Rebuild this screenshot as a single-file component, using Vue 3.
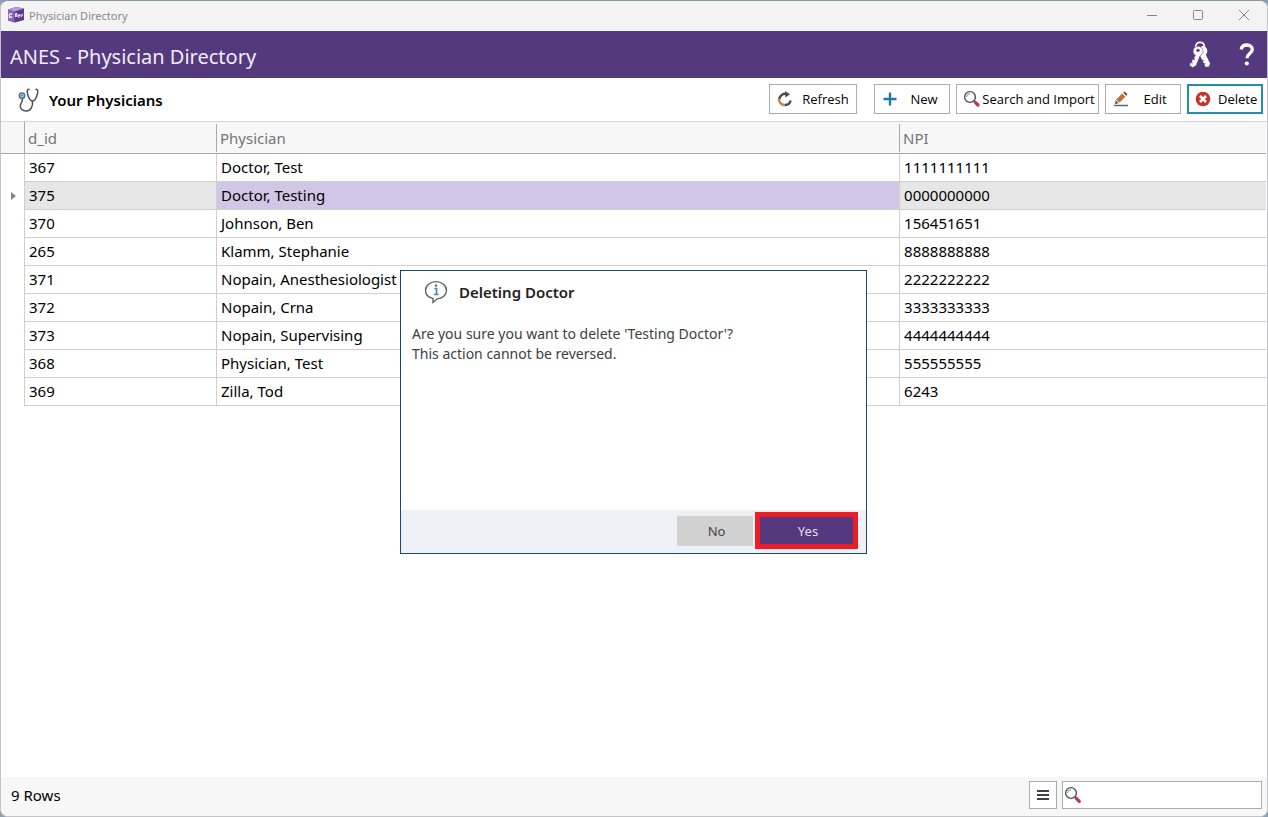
<script setup>
import { ref, computed } from 'vue'

const physicians = [
  { id: '367', name: 'Doctor, Test', npi: '1111111111' },
  { id: '375', name: 'Doctor, Testing', npi: '0000000000' },
  { id: '370', name: 'Johnson, Ben', npi: '156451651' },
  { id: '265', name: 'Klamm, Stephanie', npi: '8888888888' },
  { id: '371', name: 'Nopain, Anesthesiologist', npi: '2222222222' },
  { id: '372', name: 'Nopain, Crna', npi: '3333333333' },
  { id: '373', name: 'Nopain, Supervising', npi: '4444444444' },
  { id: '368', name: 'Physician, Test', npi: '555555555' },
  { id: '369', name: 'Zilla, Tod', npi: '6243' },
]
const selected = ref('375')
const dialogOpen = ref(true)
const search = ref('')
const rows = computed(() =>
  physicians.filter((p) => p.name.toLowerCase().includes(search.value.toLowerCase()))
)
</script>

<template>
  <div class="window">
    <div class="titlebar">
      <svg class="app-icon" width="16" height="16" viewBox="0 0 16 16">
        <path d="M0 2.500 8 0l8 1.500v11.500l-9 2.500-7-2z" fill="#5b3a8c" />
        <path d="M0 2.500 8 0l8 1.500-9.500 3z" fill="#b3a0d2" />
        <path d="M0 2.500l6.500 2v11L0 13.500z" fill="#8767b4" />
        <path d="M4.200 7.200a1.700 1.700 0 1 0 0 2.500M2 10l-1 1" fill="none" stroke="#f1ebf8" stroke-width="1.200" />
        <path d="M7.500 10V6.500h1.500v1.600H7.500l1.700 1.900M12 8.500h-2.200M12 9.800a1.200 1.200 0 1 1 0-1.500M12.500 7.200l1 2.600 1.200-3" fill="none" stroke="#f1ebf8" />
      </svg>
      <span class="titlebar-text">Physician Directory</span>
      <div class="window-controls">
        <button type="button" aria-label="Minimize">
          <svg width="12" height="12" viewBox="0 0 12 12"><path d="M1 6.500h10" /></svg>
        </button>
        <button type="button" aria-label="Maximize">
          <svg width="12" height="12" viewBox="0 0 12 12"><rect x="1.500" y="1.500" width="9" height="9" rx="1" /></svg>
        </button>
        <button type="button" aria-label="Close">
          <svg width="12" height="12" viewBox="0 0 12 12"><path d="M1 1l10 10M11 1 1 11" /></svg>
        </button>
      </div>
    </div>

    <header class="banner">
      <h1>ANES - Physician Directory</h1>
      <div class="banner-actions">
        <button type="button" aria-label="Security">
          <svg width="22" height="28" viewBox="0 0 22 28">
            <path d="M6.500 6.500C6.500 3 8.500 1.400 11 1.400S15.500 3 15.500 6.500" fill="none" stroke="#fff" stroke-width="1.600" />
            <path d="M12.500 5a5 5 0 0 1 5.800 4.800c0 1.700-.6 2.800-1.500 3.600l4.200 9.200-1 2.900-3.400.6-1.200-2.400 1.200-1.300-2.100-.4-.6-1.800 1.100-1-1.900-.4-2.600-5z" fill="#fff" />
            <path d="M9 5.200a5 5 0 0 1 5 5c0 2.200-1.200 3.800-3 4.600L7.200 24.500l-3.200 2-3.400-1.800.7-3.200 2 .7-.6-2 .9-1.900 1.900.6-.6-1.900 1.500-2.600A5 5 0 0 1 9 5.200z" fill="#fff" stroke="#54397e" stroke-width=".5" />
            <circle cx="9" cy="9.300" r="1.600" fill="#54397e" />
          </svg>
        </button>
        <button type="button" aria-label="Help">
          <svg width="16" height="24" viewBox="0 0 16 24">
            <path d="M2.300 6.500C2.600 3.500 4.800 2 7.800 2c3.300 0 5.500 1.700 5.500 4.500 0 4-5.300 4.300-5.300 8.800" fill="none" stroke="#fff" stroke-width="3.300" />
            <circle cx="7.800" cy="20.500" r="2.100" fill="#fff" />
          </svg>
        </button>
      </div>
    </header>

    <section class="toolbar">
      <svg class="steth" width="22" height="26" viewBox="0 0 22 26" fill="none" stroke="#4a5057" stroke-width="1.500" stroke-linecap="round">
        <path d="M11 2.200 9.800 2.700c-1.500 1.500.8 10.800 4.700 11.500 3.900-.7 6.200-10 4.700-11.500L18 2.200" />
        <path d="M14.500 14.200c.5 5-1.500 9.600-6 9.800-4.500.1-6.200-2.300-6.200-5 0-3 2.200-3.500 2.200-7" />
        <circle cx="4" cy="8.800" r="2.700" stroke="#4c7590" fill="#a9c8da" />
        <circle cx="4" cy="8.800" r=".8" fill="#356580" stroke="none" />
      </svg>
      <h2>Your Physicians</h2>
      <div class="tools">
        <button type="button" class="tool refresh">
          <svg width="16" height="16" viewBox="0 0 16 16" fill="none" stroke-width="2.400">
            <path d="M2.700 6A5.600 5.600 0 0 0 8 14" stroke="#c88443" />
            <path d="M8 14a5.600 5.600 0 0 0 5.600-4.500M2.500 7.500A5.700 5.700 0 0 1 9.500 3" stroke="#464c55" />
            <path d="M8 0l5 3.300L8.500 6.500z" fill="#464c55" />
          </svg>
          <span>Refresh</span>
        </button>
        <button type="button" class="tool regular">
          <svg width="16" height="16" viewBox="0 0 16 16"><path d="M8 1.500v13M1.500 8h13" stroke="#1c78ae" stroke-width="2.400" /></svg>
          <span>New</span>
        </button>
        <button type="button" class="tool wide">
          <svg width="18" height="18" viewBox="0 0 18 18" fill="none">
            <circle cx="7" cy="7" r="5.400" stroke="#4b5057" stroke-width="1.400" />
            <path d="M3.600 7A3.500 3.500 0 0 1 7 3.700" stroke="#858a90" />
            <path d="M10.800 10.800l1.500 1.500" stroke="#4b5057" stroke-width="1.400" />
            <path d="M12.300 12.300l2.700 2.700" stroke="#c03060" stroke-width="3.200" stroke-linecap="round" />
          </svg>
          <span>Search and Import</span>
        </button>
        <button type="button" class="tool regular">
          <svg width="16" height="16" viewBox="0 0 16 16">
            <path d="M1 14.500h14" stroke="#53677a" stroke-width="1.400" />
            <path d="M3.200 8.600 9.200 2.600l3.200 3.200-6 6z" fill="#c1722b" />
            <path d="M2.700 9.300 2 12.900l3.600-.7zM10.300 1.700l1.200-1.200 3 3-1.200 1.200z" fill="#3f4852" />
          </svg>
          <span>Edit</span>
        </button>
        <button type="button" class="tool regular focused" @click="dialogOpen = true">
          <svg width="16" height="16" viewBox="0 0 16 16">
            <circle cx="8" cy="8" r="7.300" fill="#c5352d" />
            <path d="M5 5l6 6M11 5l-6 6" stroke="#fff" stroke-width="2.600" />
          </svg>
          <span>Delete</span>
        </button>
      </div>
    </section>

    <main class="content">
      <table>
        <colgroup>
          <col class="col-marker" />
          <col class="col-id" />
          <col class="col-name" />
          <col />
        </colgroup>
        <thead>
          <tr>
            <td></td>
            <th scope="col"><span>d_id</span></th>
            <th scope="col"><span>Physician</span></th>
            <th scope="col"><span>NPI</span></th>
          </tr>
        </thead>
        <tbody>
          <tr v-for="p in rows" :key="p.id" :class="{ selected: p.id === selected }" @click="selected = p.id">
            <td class="marker">
              <svg v-if="p.id === selected" width="5" height="8" viewBox="0 0 5 8"><path d="M0 0l5 4-5 4z" fill="#858585" /></svg>
            </td>
            <td>{{ p.id }}</td>
            <td class="name">{{ p.name }}</td>
            <td>{{ p.npi }}</td>
          </tr>
        </tbody>
      </table>
    </main>

    <footer class="status">
      <span>{{ rows.length }} Rows</span>
      <div class="status-tools">
        <button type="button" class="menu" aria-label="Options">
          <svg width="12" height="12" viewBox="0 0 12 12"><path d="M0 2h12M0 6h12M0 10h12" stroke="#3c434b" stroke-width="1.800" /></svg>
        </button>
        <div class="search">
          <svg width="18" height="18" viewBox="0 0 18 18" fill="none">
            <circle cx="7" cy="7" r="5.400" stroke="#4b5057" stroke-width="1.400" />
            <path d="M3.600 7A3.500 3.500 0 0 1 7 3.700" stroke="#858a90" />
            <path d="M10.800 10.800l1.500 1.500" stroke="#4b5057" stroke-width="1.400" />
            <path d="M12.300 12.300l3 3" stroke="#c03060" stroke-width="3.200" stroke-linecap="round" />
          </svg>
          <input v-model="search" type="text" aria-label="Search physicians" />
        </div>
      </div>
    </footer>

    <div v-if="dialogOpen" class="overlay">
      <div class="dialog" role="dialog" aria-labelledby="dialog-title">
        <div class="dialog-head">
          <svg width="24" height="24" viewBox="0 0 24 24">
            <path d="M9 18.400C4.500 17.500 1.500 14.500 1.500 10.500c0-5 4.500-8.800 10.500-8.800s10.500 3.800 10.500 8.800c0 4.500-4 8-9.500 8.300l-4 3.700z" fill="#fff" stroke="#555b61" stroke-width="1.300" />
            <path d="M10.300 8.500h2.200v6M10 14.500h4.500" fill="none" stroke="#4384b2" stroke-width="1.700" />
            <circle cx="12" cy="5.600" r="1.300" fill="#4384b2" />
          </svg>
          <h3 id="dialog-title">Deleting Doctor</h3>
        </div>
        <p>Are you sure you want to delete 'Testing Doctor'?<br />This action cannot be reversed.</p>
        <div class="dialog-foot">
          <button type="button" class="no" @click="dialogOpen = false">No</button>
          <button type="button" class="yes" @click="dialogOpen = false">Yes</button>
        </div>
      </div>
    </div>
  </div>
</template>

<style>
body {
  margin: 0;
  background: #8f9fb0;
}
</style>

<style scoped>
.window {
  position: relative;
  box-sizing: border-box;
  display: flex;
  flex-direction: column;
  min-height: 100vh;
  border: 1px solid #c4c4c8;
  border-top-color: #8996a6;
  border-radius: 8px;
  overflow: hidden;
  background: #fff;
  color: #000;
  font-family: "Noto Sans", "Open Sans", sans-serif;
  font-size: 15px;
}
button {
  padding: 0;
  border: 0;
  background: none;
  color: inherit;
  font-family: inherit;
}
svg {
  display: block;
  flex: none;
}
h1, h2, h3, p {
  margin: 0;
}
.titlebar {
  box-sizing: border-box;
  display: flex;
  align-items: center;
  height: 30px;
  padding: 0 0 2px 7px;
  background: #f3f3f3;
  color: #898989;
  font-size: 11px;
}
.titlebar-text {
  margin-left: 5px;
}
.window-controls {
  display: flex;
  margin-left: auto;
}
.window-controls button {
  display: grid;
  place-items: center;
  width: 46px;
  height: 28px;
}
.window-controls svg {
  fill: none;
  stroke: #858585;
}
.banner {
  display: flex;
  align-items: center;
  justify-content: space-between;
  height: 47px;
  padding: 0 12px 0 9px;
  background: #54397e;
  color: #f0edf5;
}
.banner h1 {
  padding-top: 4px;
  font-size: 20px;
  font-weight: 400;
  line-height: 28px;
}
.banner-actions {
  display: flex;
  align-items: center;
  gap: 28px;
}
.toolbar {
  display: flex;
  align-items: center;
  height: 43px;
  padding: 0 4px 0 17px;
  border-bottom: 1px solid #d4d4d4;
}
.toolbar h2 {
  margin-left: 9px;
  font-size: 15px;
  font-weight: 600;
}
.tools {
  display: flex;
  gap: 6px;
  margin-left: auto;
  padding-bottom: 2px;
}
.tool {
  box-sizing: border-box;
  display: flex;
  align-items: center;
  height: 30px;
  padding: 0 6px 0 7px;
  border: 1px solid #adadad;
  background: #fff;
  font-family: "Open Sans", "Noto Sans", sans-serif;
  font-size: 13px;
  white-space: nowrap;
}
.tool span {
  flex: 1;
  text-align: center;
}
.refresh {
  width: 88px;
  margin-right: 11px;
}
.refresh span {
  padding-left: 8px;
}
.regular {
  width: 76px;
}
.regular span {
  padding-left: 7px;
}
.wide {
  width: 143px;
  padding: 0 2px 0 6px;
}
.focused {
  padding: 0 5px 0 6px;
  border: 2px solid #2191a8;
}
.content {
  flex: 1;
  padding-right: 1px;
}
table {
  width: 100%;
  table-layout: fixed;
  border-collapse: separate;
  border-spacing: 0;
}
.col-marker {
  width: 24px;
}
.col-id {
  width: 192px;
}
.col-name {
  width: 54%;
}
td, th {
  box-sizing: border-box;
  padding: 0 4px 2px;
  overflow: hidden;
  line-height: 24px;
  text-align: left;
  white-space: nowrap;
}
thead td, thead th {
  height: 32px;
  padding: 0;
  border-bottom: 1px solid #a8a8a8;
  background: #f7f7f7;
}
thead td {
  border-right: 1px solid #a8a8a8;
}
th span {
  display: block;
  padding-left: 3px;
  border-right: 1px solid #a8a8a8;
  color: #757575;
  font-weight: 400;
  line-height: 28px;
}
th:last-child span {
  border-right: 0;
}
tbody td {
  height: 28px;
  border-right: 1px solid #cfcfcf;
  border-bottom: 1px solid #cfcfcf;
}
tbody td:last-child {
  border-right: 0;
}
tbody .marker {
  padding: 0 0 0 10px;
  border-bottom: 0;
}
.selected td:not(.marker) {
  background: #e6e6e6;
}
.selected td.name {
  background: #d2c6e7;
}
.status {
  box-sizing: border-box;
  display: flex;
  align-items: center;
  justify-content: space-between;
  height: 39px;
  padding: 0 5px 3px 10px;
  background: #f7f7f7;
}
.status-tools {
  display: flex;
  gap: 5px;
}
.menu {
  box-sizing: border-box;
  display: grid;
  place-items: center;
  width: 28px;
  height: 28px;
  border: 1px solid #adadad;
  background: #fff;
}
.search {
  box-sizing: border-box;
  display: flex;
  align-items: center;
  width: 200px;
  height: 28px;
  padding-left: 1px;
  border: 1px solid #adadad;
  background: #fff;
}
.search input {
  flex: 1;
  min-width: 0;
  border: 0;
  outline: 0;
  background: none;
  font: inherit;
}
.overlay {
  position: absolute;
  inset: 0;
  display: grid;
  place-items: center;
  padding: 7px 1px 0 0;
}
.dialog {
  box-sizing: border-box;
  display: flex;
  flex-direction: column;
  width: 467px;
  min-height: 284px;
  border: 1px solid #184a68;
  background: #fff;
}
.dialog-head {
  display: flex;
  align-items: center;
  gap: 11px;
  height: 42px;
  padding-left: 23px;
}
.dialog h3 {
  color: #222;
  font-size: 15px;
  font-weight: 600;
}
.dialog p {
  flex: 1;
  padding: 11px 11px 0;
  color: #404040;
  font-size: 14px;
  line-height: 20px;
}
.dialog-foot {
  box-sizing: border-box;
  display: flex;
  align-items: center;
  justify-content: flex-end;
  gap: 2px;
  height: 43px;
  padding: 0 8px 2px 0;
  background: #edf0f5;
}
.dialog-foot button {
  box-sizing: border-box;
  padding-left: 3px;
  font-size: 13px;
}
.no {
  width: 76px;
  height: 30px;
  background: #d1d1d1;
  color: #444;
}
.dialog-foot .yes {
  width: 103px;
  height: 37px;
  border: 5px solid #ee1c25;
  background: #54397e;
  color: #e4dfec;
}
</style>
